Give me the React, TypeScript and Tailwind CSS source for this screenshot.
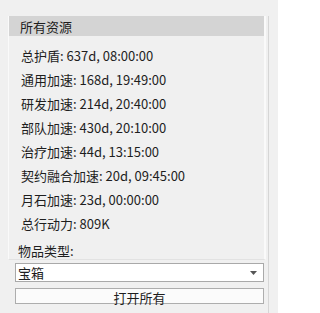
import React from "react";

const rows = [
  "总护盾: 637d, 08:00:00",
  "通用加速: 168d, 19:49:00",
  "研发加速: 214d, 20:40:00",
  "部队加速: 430d, 20:10:00",
  "治疗加速: 44d, 13:15:00",
  "契约融合加速: 20d, 09:45:00",
  "月石加速: 23d, 00:00:00",
  "总行动力: 809K",
];

export default function App() {
  return (
    <div
      className="w-[278px] h-[313px] bg-[#f0f0f0] pt-4 pl-2 text-[13px] text-[#1e1e1e] overflow-hidden"
      style={{ fontFamily: '"Noto Sans CJK SC", "Noto Sans", sans-serif' }}
    >
      <div className="w-[261px] h-[297px] border-r border-[#d6d6d6] flex flex-col">
        <div className="w-[258px] border-r-2 border-b border-r-[#fafafa] border-b-[#e2e2e2] border-l border-l-[#fafafa] flex flex-col">
          <div className="h-[20px] bg-[#d4d4d4] pl-[11px] flex items-center leading-none">
            所有资源
          </div>
          <div className="pt-[7px] pl-[12px] flex flex-col">
            {rows.map((r) => (
              <div key={r} className="h-[24px] flex items-center whitespace-nowrap leading-none">
                {r}
              </div>
            ))}
          </div>
          <div className="mt-[7px] h-[16px] pl-[9px] flex items-center leading-none">物品类型:</div>
          <div className="h-[1px]" />
        </div>
        <div className="mt-[3px] ml-[7px] w-[249px] h-[19px] bg-white border border-[#a9a9a9] flex items-center justify-between pl-[2px] pr-[6px] leading-none">
          <span>宝箱</span>
          <svg width="7" height="4" viewBox="0 0 7 4">
            <path d="M0 0 L7 0 L3.5 4 Z" fill="#555" />
          </svg>
        </div>
        <div className="mt-[6px] ml-[7px] w-[249px] h-[16px] bg-[#fbfbfb] border border-[#adadad] flex items-center justify-center leading-none pt-[2px]">
          打开所有
        </div>
      </div>
    </div>
  );
}
